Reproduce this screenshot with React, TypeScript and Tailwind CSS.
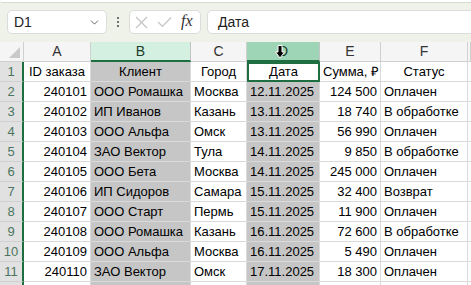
import React from 'react';
import { ChevronDown } from 'lucide-react';

type Row = [string, string, string, string, string, string];

const rows: Row[] = [
  ['240101', 'ООО Ромашка', 'Москва', '12.11.2025', '124 500', 'Оплачен'],
  ['240102', 'ИП Иванов', 'Казань', '13.11.2025', '18 740', 'В обработке'],
  ['240103', 'ООО Альфа', 'Омск', '13.11.2025', '56 990', 'Оплачен'],
  ['240104', 'ЗАО Вектор', 'Тула', '14.11.2025', '9 850', 'В обработке'],
  ['240105', 'ООО Бета', 'Москва', '14.11.2025', '245 000', 'Оплачен'],
  ['240106', 'ИП Сидоров', 'Самара', '15.11.2025', '32 400', 'Возврат'],
  ['240107', 'ООО Старт', 'Пермь', '15.11.2025', '11 900', 'Оплачен'],
  ['240108', 'ООО Ромашка', 'Казань', '16.11.2025', '72 600', 'В обработке'],
  ['240109', 'ООО Альфа', 'Москва', '16.11.2025', '5 490', 'Оплачен'],
  ['240110', 'ЗАО Вектор', 'Омск', '17.11.2025', '18 300', 'Оплачен'],
];

const grid = 'grid grid-cols-[24px_67px_100px_56px_73px_61px_87px_1fr]';
const cell = 'h-[20px] border-r border-b border-[#dadada] px-[3px] leading-[19px] whitespace-nowrap overflow-hidden';
const rowHead = 'h-[20px] bg-[#e1e1e1] border-b border-[#d0d0d0] border-r-2 border-r-[#1e6e42] text-center text-[13px] leading-[19px] text-[#4a7560]';

const FormulaBar = () => (
  <div className="h-[42px] bg-[#eef2e9] relative flex items-start pt-[10px] pl-[7px] gap-0">
    <div className="absolute top-0 left-0 right-0 h-[3px] bg-white border-b border-[#d6d9d2] rounded-bl-[4px]" />
    <div className="w-[100px] h-[24px] bg-white border border-[#dcdcdc] rounded-[5px] flex items-center pl-[6px] pr-[5px] justify-between">
      <span className="text-[14px] text-[#222]">D1</span>
      <ChevronDown size={13} strokeWidth={1.6} className="text-[#555]" />
    </div>
    <div className="w-[22px] h-[24px] flex flex-col items-center justify-center gap-[2px]">
      <span className="w-[2px] h-[2px] bg-[#444] rounded-full" />
      <span className="w-[2px] h-[2px] bg-[#444] rounded-full" />
      <span className="w-[2px] h-[2px] bg-[#444] rounded-full" />
    </div>
    <div className="w-[72px] h-[24px] bg-white border border-[#dcdcdc] rounded-[5px] flex items-center pl-[5px] gap-[9px]">
      <svg width="13" height="13" viewBox="0 0 13 13" className="shrink-0">
        <path d="M1 1 L12 12 M12 1 L1 12" stroke="#c4c4c4" strokeWidth="1.2" fill="none" />
      </svg>
      <svg width="15" height="12" viewBox="0 0 15 12" className="shrink-0">
        <path d="M1 6 L5.5 10.5 L14 1.5" stroke="#c4c4c4" strokeWidth="1.2" fill="none" />
      </svg>
      <span className="italic text-[16px] text-[#333] leading-none -mt-[2px]" style={{ fontFamily: '"Liberation Serif", serif' }}>
        fx
      </span>
    </div>
    <div className="flex-1 ml-[6px] -mr-[6px] h-[24px] bg-white border border-[#dcdcdc] rounded-[5px] flex items-center pl-[10px]">
      <span className="text-[14px] text-[#222]">Дата</span>
    </div>
  </div>
);

const HeaderRow = () => {
  const cols = [
    { l: 'A', sel: false },
    { l: 'B', sel: true },
    { l: 'C', sel: false },
    { l: 'D', sel: true, active: true },
    { l: 'E', sel: false },
    { l: 'F', sel: false },
    { l: '', sel: false },
  ];
  return (
    <div className={grid}>
      <div className="h-[20px] bg-[#f5f5f5] border-r border-b border-[#d0d0d0] relative">
        <svg width="11" height="11" viewBox="0 0 11 11" className="absolute right-[3px] bottom-[3px]">
          <path d="M11 0 L11 11 L0 11 Z" fill="#c9c9c9" />
        </svg>
      </div>
      {cols.map((c, i) => (
        <div
          key={i}
          className={
            'h-[20px] border-r text-center text-[14px] leading-[19px] relative ' +
            (c.active
              ? 'bg-[#9fd5b7] border-b-2 border-b-[#1e6e42] border-r-[#c4c4c4] text-[#1c3d2c]'
              : c.sel
              ? 'bg-[#d3f0e0] border-b-2 border-b-[#1e6e42] border-r-[#c4c4c4] text-[#1c3d2c]'
              : 'bg-[#f5f5f5] border-b border-[#d0d0d0] text-[#333]')
          }
        >
          {c.l}
          {c.active && (
            <svg width="10" height="14" viewBox="0 0 10 14" className="absolute left-[28px] top-[3px]">
              <path d="M3 0.5 H7 V7 H9.5 L5 13 L0.5 7 H3 Z" fill="#000" stroke="#fff" strokeWidth="1" />
            </svg>
          )}
        </div>
      ))}
    </div>
  );
};

const App = () => {
  return (
    <div
      className="w-[471px] h-[285px] overflow-hidden bg-white text-[13px] text-black"
      style={{ fontFamily: '"Liberation Sans", Arial, sans-serif' }}
    >
      <FormulaBar />
      <HeaderRow />
      <div className={grid}>
        <div className={rowHead}>1</div>
        <div className={cell + ' text-center'}>ID заказа</div>
        <div className={cell + ' text-center bg-[#c6c6c6] border-[#b9b9b9]'}>Клиент</div>
        <div className={cell + ' text-center'}>Город</div>
        <div className="h-[20px] bg-white border-2 border-[#1e6e42] text-center leading-[16px] whitespace-nowrap">Дата</div>
        <div className={cell + ' text-center px-[1px]'}>Сумма, ₽</div>
        <div className={cell + ' text-center'}>Статус</div>
        <div className={cell} />
        {rows.map((r, i) => (
          <React.Fragment key={i}>
            <div className={rowHead}>{i + 2}</div>
            <div className={cell + ' text-right'}>{r[0]}</div>
            <div className={cell + ' bg-[#c6c6c6] border-[#b9b9b9]'}>{r[1]}</div>
            <div className={cell}>{r[2]}</div>
            <div className={cell + ' text-right pr-[5px] bg-[#c6c6c6] border-[#b9b9b9]'}>{r[3]}</div>
            <div className={cell + ' text-right'}>{r[4]}</div>
            <div className={cell}>{r[5]}</div>
            <div className={cell} />
          </React.Fragment>
        ))}
        <div className={rowHead} />
        <div className={cell} />
        <div className={cell + ' bg-[#c6c6c6] border-[#b9b9b9]'} />
        <div className={cell} />
        <div className={cell + ' bg-[#c6c6c6] border-[#b9b9b9]'} />
        <div className={cell} />
        <div className={cell} />
        <div className={cell} />
      </div>
    </div>
  );
};

export default App;
